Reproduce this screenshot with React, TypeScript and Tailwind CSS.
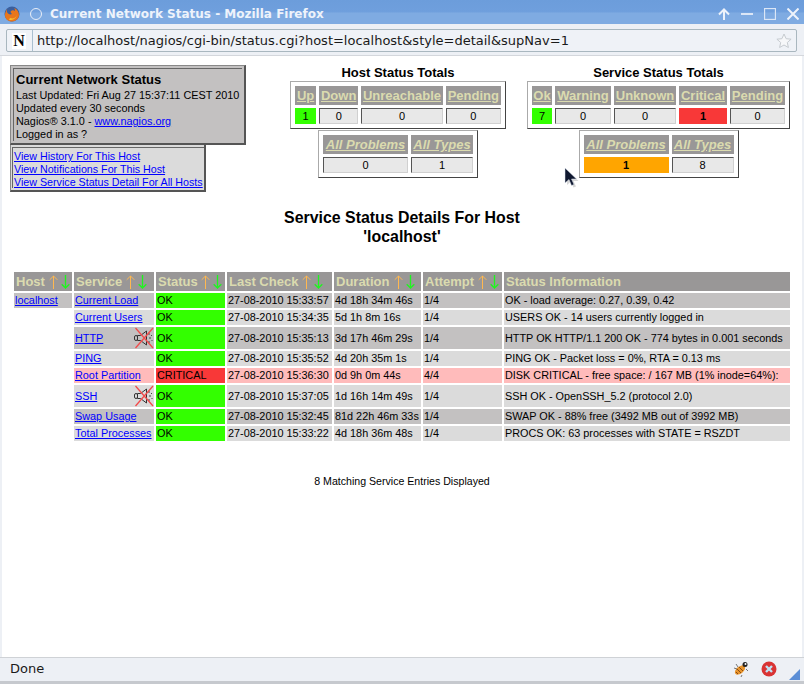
import React from "react";

const Arrows = () => (
  <svg width="21" height="14" viewBox="0 0 21 14" className="shrink-0">
    <path d="M4.500 14V1M0.700 4.800L4.500 1L8.300 4.800" fill="none" stroke="#ffb850" strokeWidth="1" />
    <path d="M16.500 0V13M12.700 9.200L16.500 13L20.300 9.200" fill="none" stroke="#1ff51f" strokeWidth="1.300" />
  </svg>
);

const Muted = () => (
  <svg width="20" height="22" viewBox="0 0 20 22" className="shrink-0">
    <rect x="0.500" y="8.500" width="3" height="5" rx="1.500" fill="none" stroke="#333" />
    <path d="M3.500 8.500h3L12.500 4v14l-6-4.500h-3z" fill="none" stroke="#333" />
    <path d="M15 6v2M16 10v2M15 14v2M17.500 8v1M18 13v1" stroke="#444" strokeWidth="1" />
    <path d="M1.500 1L19 21M19 1L1.500 21" stroke="#f24a4a" strokeWidth="1.300" />
  </svg>
);

const cols = [58, 80, 69, 105, 87, 79, 286];
const heads = ["Host", "Service", "Status", "Last Check", "Duration", "Attempt", "Status Information"];
const arrowAt = [33, 50, 43, 73, 58, 53, 0];

type Row = { s: string; h?: boolean; st: string; c: string; d: string; a: string; i: string; m?: boolean; tall?: boolean; bg: string };
const rows: Row[] = [
  { h: true, s: "Current Load", st: "OK", c: "27-08-2010 15:33:57", d: "4d 18h 34m 46s", a: "1/4", i: "OK - load average: 0.27, 0.39, 0.42", bg: "bg-[#c3c1c1]" },
  { s: "Current Users", st: "OK", c: "27-08-2010 15:34:35", d: "5d 1h 8m 16s", a: "1/4", i: "USERS OK - 14 users currently logged in", bg: "bg-[#dbdbdb]" },
  { s: "HTTP", m: true, tall: true, st: "OK", c: "27-08-2010 15:35:13", d: "3d 17h 46m 29s", a: "1/4", i: "HTTP OK HTTP/1.1 200 OK - 774 bytes in 0.001 seconds", bg: "bg-[#c3c1c1]" },
  { s: "PING", st: "OK", c: "27-08-2010 15:35:52", d: "4d 20h 35m 1s", a: "1/4", i: "PING OK - Packet loss = 0%, RTA = 0.13 ms", bg: "bg-[#dbdbdb]" },
  { s: "Root Partition", st: "CRITICAL", c: "27-08-2010 15:36:30", d: "0d 9h 0m 44s", a: "4/4", i: "DISK CRITICAL - free space: / 167 MB (1% inode=64%):", bg: "bg-[#ffbbbb]" },
  { s: "SSH", m: true, tall: true, st: "OK", c: "27-08-2010 15:37:05", d: "1d 16h 14m 49s", a: "1/4", i: "SSH OK - OpenSSH_5.2 (protocol 2.0)", bg: "bg-[#dbdbdb]" },
  { s: "Swap Usage", st: "OK", c: "27-08-2010 15:32:45", d: "81d 22h 46m 33s", a: "1/4", i: "SWAP OK - 88% free (3492 MB out of 3992 MB)", bg: "bg-[#c3c1c1]" },
  { s: "Total Processes", st: "OK", c: "27-08-2010 15:33:22", d: "4d 18h 36m 48s", a: "1/4", i: "PROCS OK: 63 processes with STATE = RSZDT", bg: "bg-[#dbdbdb]" },
];

const Val = ({ v, w, color }: { v: string; w: number; color?: string }) => (
  <td
    style={{ width: w }}
    className={`h-[16px] p-0 text-center text-[11px] leading-[13px] text-black ${
      color ?? "bg-[#e8e8e8] border border-t-[#555] border-l-[#555] border-r-[#d0d0d0] border-b-[#d0d0d0]"
    }`}
  >
    {v}
  </td>
);

const Totals = ({
  heads,
  vals,
  italic,
  className,
}: {
  heads: [string, number][];
  vals: [string, string?][];
  italic?: boolean;
  className?: string;
}) => (
  <table className={`border-separate border-spacing-[3px] border border-t-[#aaa] border-l-[#aaa] border-r-[#444] border-b-[#444] p-px bg-white ${className ?? ""}`}>
    <tbody>
      <tr>
        {heads.map(([h, w]) => (
          <th
            key={h}
            style={{ width: w }}
            className={`h-[19px] p-0 bg-[#999797] text-center text-[13px] font-bold leading-[15px] text-[#dbdbaf] underline whitespace-nowrap ${italic ? "italic" : ""}`}
          >
            {h}
          </th>
        ))}
      </tr>
      <tr>
        {vals.map(([v, c], i) => (
          <Val key={i} v={v} w={heads[i][1]} color={c} />
        ))}
      </tr>
    </tbody>
  </table>
);

const Fox = () => (
  <svg width="16" height="16" viewBox="0 0 16 16">
    <circle cx="8" cy="8" r="7.500" fill="#3b5f9e" />
    <path d="M2 3C3 5 1 6 1 9c0 4 3 6.500 7 6.500s7-3 7-6.500c0-3-2-6-5-7 1 1 1 2 1 3-1-1-3-1-4 0-1 1 0 2 1 3-2 1-4 0-5-2 0-1 0-2-1-3z" fill="#e8761c" />
    <path d="M6 12c3 1 6 0 7-3-1 4-5 5.500-8 5z" fill="#f7c230" />
  </svg>
);

export default function App() {
  return (
    <div className="w-[804px] h-[684px] flex flex-col overflow-hidden bg-[#edf0f5] [font-family:'Liberation_Sans',Arial,sans-serif]">
      {/* title bar */}
      <div className="h-6 shrink-0 flex items-center pt-[3px] pl-1 pr-[5px] bg-[linear-gradient(#6c9ddb_0%,#6f9fdd_50%,#7fabe2_54%,#7fabe2_100%)] [font-family:'DejaVu_Sans',sans-serif]">
        <Fox />
        <div className="ml-[10px] w-3 h-3 rounded-full border border-[#e8eef8]" />
        <div className="ml-2 text-[12px] font-bold leading-none text-[#eef3fb] whitespace-nowrap">
          Current Network Status - Mozilla Firefox
        </div>
        <div className="ml-auto flex items-center gap-[11px] text-white">
          <svg width="12" height="12" viewBox="0 0 12 12"><path d="M6 12V1.500M1 6.500L6 1.500L11 6.500" fill="none" stroke="#eef3fb" strokeWidth="2" /></svg>
          <svg width="12" height="12" viewBox="0 0 12 12"><path d="M0 6H12" stroke="#dbe6f6" strokeWidth="2" /></svg>
          <svg width="12" height="12" viewBox="0 0 12 12"><rect x="0.500" y="0.500" width="11" height="11" fill="none" stroke="#dbe6f6" strokeWidth="1.300" /></svg>
          <svg width="12" height="12" viewBox="0 0 12 12"><path d="M0.500 0.500L11.500 11.500M11.500 0.500L0.500 11.500" stroke="#eef3fb" strokeWidth="2" /></svg>
        </div>
      </div>
      {/* address bar */}
      <div className="h-8 shrink-0 flex items-start pt-[5px] pl-[6px] pr-[7px] border-b border-[#d4d7dc] [font-family:'DejaVu_Sans',sans-serif]">
        <div className="flex-1 h-[23px] flex items-center border border-[#a9b7bf] rounded-[2px] bg-[#eff2f7]">
          <div className="ml-[5px] w-[14px] h-[16px] bg-white flex items-center justify-center text-[16px] leading-none font-bold text-black [font-family:'Liberation_Serif',serif]">N</div>
          <div className="ml-[6px] w-px h-[21px] bg-[#a9bfd0]" />
          <div className="ml-[4px] text-[13px] leading-none text-[#1a1a1a] whitespace-nowrap">
            http://localhost/nagios/cgi-bin/status.cgi?host=localhost&amp;style=detail&amp;supNav=1
          </div>
          <svg className="ml-auto mr-[4px]" width="16" height="16" viewBox="0 0 16 16">
            <path d="M8 1l2.100 4.700 5 .5-3.800 3.300 1.100 5L8 12l-4.400 2.500 1.100-5L.9 6.200l5-.5z" fill="#f6f7f9" stroke="#c6cbd0" />
          </svg>
        </div>
      </div>
      {/* content */}
      <div className="relative flex-1 mx-[2px] bg-white text-black text-[10.85px] leading-[13px] flex flex-col min-h-0 items-start">
        <div className="flex items-start pt-[9px]">
          <div className="ml-2 w-[236px] shrink-0 whitespace-nowrap">
            <div className="bg-[#c3c1c1] h-[80px] p-[2px] border-solid border-[#888] border-r-[#555] border-b-[#555] [border-width:1px_2px_2px_1px]">
              <div className="h-full border border-[#666] border-r-0 border-b-0 pl-[2px] pt-[3px]">
                <div className="text-[13px] font-bold leading-[16px] mb-[1px]">Current Network Status</div>
                <div>Last Updated: Fri Aug 27 15:37:11 CEST 2010</div>
                <div>Updated every 30 seconds</div>
                <div>Nagios® 3.1.0 - <a className="text-[#0000ff] underline">www.nagios.org</a></div>
                <div>Logged in as ?</div>
              </div>
            </div>
            <div className="w-[196px] h-[47px] border-solid border-[#888] border-r-[#555] border-b-[#555] [border-width:0_2px_2px_1px] bg-[#dbdbdb] pl-[1px] pt-[2px]">
              <div className="h-[41px] border-t border-l border-[#666] pl-[1px] pt-[2px] text-[10.7px] text-[#0000ff] underline">
                <div>View History For This Host</div>
                <div>View Notifications For This Host</div>
                <div>View Service Status Detail For All Hosts</div>
              </div>
            </div>
          </div>
          <div className="ml-[44px] w-[216px] shrink-0 flex flex-col items-center">
            <div className="text-[13px] font-bold leading-[16px]">Host Status Totals</div>
            <Totals
              className="w-[216px]"
              heads={[["Up", 21], ["Down", 39], ["Unreachable", 81], ["Pending", 55]]}
              vals={[["1", "bg-[#33ff00]"], ["0"], ["0"], ["0"]]}
            />
            <Totals
              italic
              className="w-[160px] mt-px"
              heads={[["All Problems", 85], ["All Types", 62]]}
              vals={[["0"], ["1"]]}
            />
          </div>
          <div className="ml-[21px] w-[263px] shrink-0 flex flex-col items-center">
            <div className="text-[13px] font-bold leading-[16px]">Service Status Totals</div>
            <Totals
              className="w-[263px]"
              heads={[["Ok", 20], ["Warning", 56], ["Unknown", 62], ["Critical", 48], ["Pending", 55]]}
              vals={[["7", "bg-[#33ff00]"], ["0"], ["0"], ["1", "bg-[#f83838] font-bold"], ["0"]]}
            />
            <Totals
              italic
              className="w-[160px] mt-px"
              heads={[["All Problems", 85], ["All Types", 62]]}
              vals={[["1", "bg-[#ffa500] font-bold"], ["8"]]}
            />
          </div>
        </div>

        <div className="self-stretch mt-[16px] text-center text-[15.9px] font-bold leading-[19px]">
          <div>Service Status Details For Host</div>
          <div>'localhost'</div>
        </div>

        <table className="mt-[24px] ml-[10px] border-separate border-spacing-[2px] table-fixed w-[780px]">
          <colgroup>
            {cols.map((w, i) => (
              <col key={i} style={{ width: w }} />
            ))}
          </colgroup>
          <thead>
            <tr>
              {heads.map((h, i) => (
                <th key={h} className="h-[19px] p-0 pl-[2px] bg-[#999797] text-left text-[13px] font-bold leading-[15px] text-[#dbdbaf] whitespace-nowrap">
                  <div className="flex items-center">
                    <span style={i < 6 ? { width: arrowAt[i] } : undefined}>{h}</span>
                    {i < 6 && <Arrows />}
                  </div>
                </th>
              ))}
            </tr>
          </thead>
          <tbody>
            {rows.map((r) => {
              const td = `p-0 pl-[1px] leading-[13px] whitespace-nowrap ${r.tall ? "h-[22px]" : "h-[15px]"} ${r.bg}`;
              return (
                <tr key={r.s}>
                  {r.h ? (
                    <td className="p-0 pl-[1px] h-[15px] bg-[#c3c1c1] text-[#0000ff] underline">localhost</td>
                  ) : (
                    <td className="p-0" />
                  )}
                  <td className={td}>
                    <div className="flex items-center justify-between">
                      <a className="text-[#0000ff] underline">{r.s}</a>
                      {r.m && <Muted />}
                    </div>
                  </td>
                  <td className={`p-0 pl-[1px] leading-[13px] ${r.st === "OK" ? "bg-[#33ff00]" : "bg-[#f83838]"}`}>{r.st}</td>
                  <td className={td}>{r.c}</td>
                  <td className={td}>{r.d}</td>
                  <td className={td}>{r.a}</td>
                  <td className={td}>{r.i}</td>
                </tr>
              );
            })}
          </tbody>
        </table>

        <div className="self-stretch mt-[32px] text-center text-[10.6px] leading-[13px]">8 Matching Service Entries Displayed</div>

        <svg className="absolute left-[562px] top-[112px]" width="18" height="22" viewBox="0 0 18 22">
          <path d="M3 2v15l4-3.500 2.500 6 2.500-1-2.500-5.500 5 0z" fill="#bbb" opacity="0.600" />
          <path d="M1 0v15l4-3.500 2.500 6 2.500-1-2.500-5.500 5 0z" fill="#101830" stroke="#dfe6f0" strokeWidth="0.500" />
        </svg>
      </div>
      {/* status bar */}
      <div className="h-[24px] shrink-0 border-t border-[#cfd2d6] flex items-center pb-[2px] pl-[10px] pr-[4px] text-[13px] text-[#1a1a1a] [font-family:'DejaVu_Sans',sans-serif] relative">
        <span className="leading-none">Done</span>
        <svg className="ml-auto" width="16" height="16" viewBox="0 0 16 16">
          <ellipse cx="7" cy="9" rx="3.500" ry="6" transform="rotate(50 7 9)" fill="#e8942c" />
          <path d="M4 8l4 4M6 6l4 4M3 11l2 2" stroke="#8a4b10" strokeWidth="1" />
          <circle cx="12" cy="3.500" r="2.500" fill="#222" />
          <circle cx="12.500" cy="3" r="1" fill="#fff" />
          <path d="M1 7l3 1M3 3l2 3M9 14l-1 2M13 8l2 2" stroke="#555" strokeWidth="0.800" />
        </svg>
        <svg className="ml-[12px] mr-[23px]" width="16" height="16" viewBox="0 0 16 16">
          <circle cx="8" cy="8" r="7.500" fill="#d93434" />
          <path d="M5 5l6 6M11 5l-6 6" stroke="#bfe4f5" strokeWidth="2.400" />
        </svg>
        <svg className="absolute right-[4px] bottom-[1px]" width="11" height="11" viewBox="0 0 11 11">
          <path d="M11 0v11H0z" fill="#5b8ed6" />
        </svg>
      </div>
      <div className="h-[3px] shrink-0 bg-[#c6c9ce]" />
    </div>
  );
}
